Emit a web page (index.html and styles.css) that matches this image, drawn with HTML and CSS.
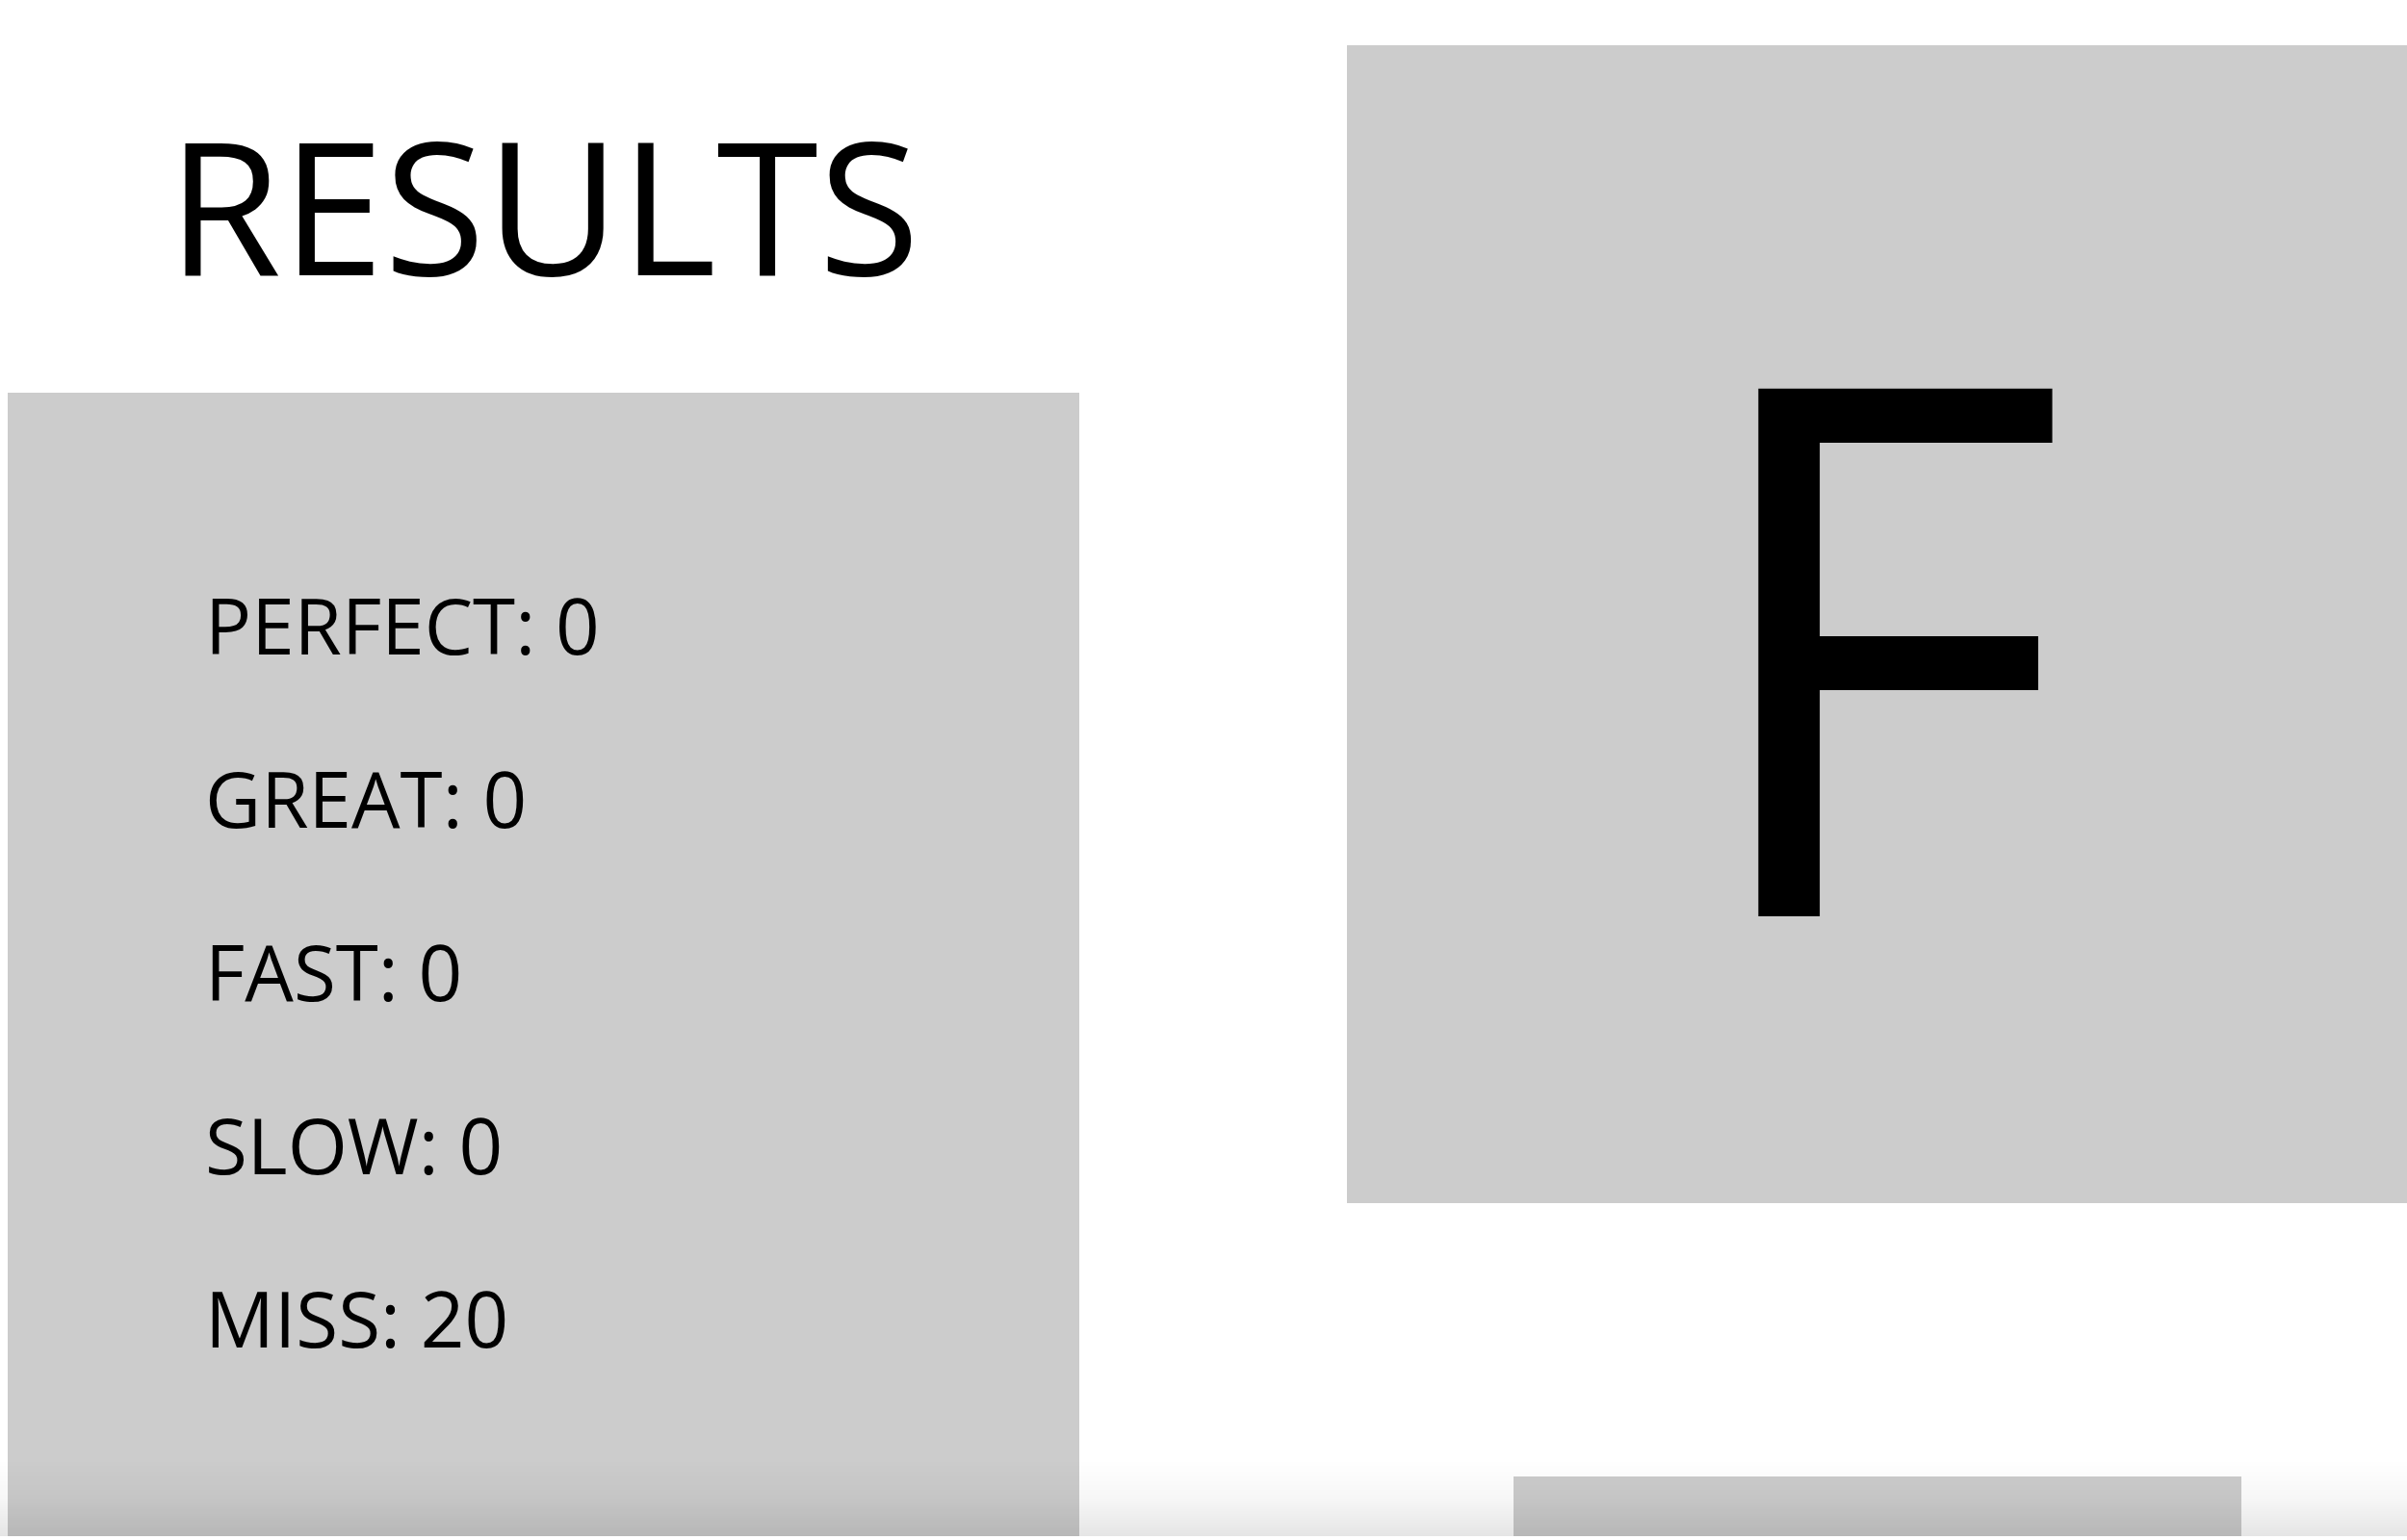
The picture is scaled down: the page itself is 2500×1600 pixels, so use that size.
FILE: index.html
```html
<!DOCTYPE html>
<html lang="en">
  <head>
    <meta charset="UTF-8" />
    <meta name="viewport" content="width=device-width, initial-scale=1.0" />
    <title>Results</title>
    <link rel="stylesheet" href="styles.css">
  </head>
  <body>
    <div class="results">
      <div class="left-col">
        <h1>RESULTS</h1>
        <div class="stats">
          <p>PERFECT: 0</p>
          <p>GREAT: 0</p>
          <p>FAST: 0</p>
          <p>SLOW: 0</p>
          <p>MISS: 20</p>
        </div>
      </div>

      <div class="right-col">
        <div class="grade">F</div>
        <div class="retry"></div>
      </div>
    </div>

    <div class="fade"></div>
  </body>
</html>
```

FILE: styles.css
```css
body {
  font-family: "Open Sans", "Noto Sans", sans-serif;
  background: #fff;
  color: #000;
  margin: 8px 0 0 8px;
  overflow: hidden;
}

/* ========== Layout ========== */
.results {
  display: flex;
  align-items: flex-start;
}

.left-col {
  width: 1113px;
  flex-shrink: 0;
}

.right-col {
  width: 1101px;
  flex-shrink: 0;
  margin-left: 278px;
  margin-top: 39px;
  display: flex;
  flex-direction: column;
  align-items: center;
}

/* ========== Title ========== */
h1 {
  font-size: 192px;
  font-weight: normal;
  line-height: 192px;
  text-align: center;
  margin: 108px 0 100px;
}

/* ========== Stats ========== */
.stats {
  box-sizing: border-box;
  background-color: #ccc;
  padding: 111px 0 0 205px;
  height: 1192px;
}

.stats p {
  font-size: 80px;
  line-height: 100px;
  margin: 80px 0;
}

/* ========== Grade ========== */
.grade {
  align-self: stretch;
  height: 1192px;
  padding-top: 11px;
  background-color: #ccc;
  display: flex;
  justify-content: center;
  align-items: center;
  font-size: 768px;
  line-height: 1;
}

.retry {
  width: 756px;
  height: 66px;
  margin-top: 284px;
  background-color: #ccc;
}

/* bottom shading of the window */
.fade {
  position: fixed;
  left: 0;
  right: 0;
  bottom: 0;
  height: 84px;
  pointer-events: none;
  background: linear-gradient(
    to bottom,
    rgba(0, 0, 0, 0) 0,
    rgba(0, 0, 0, 0.03) 40px,
    rgba(0, 0, 0, 0.1) 80px,
    #fff 80px
  );
}
```
